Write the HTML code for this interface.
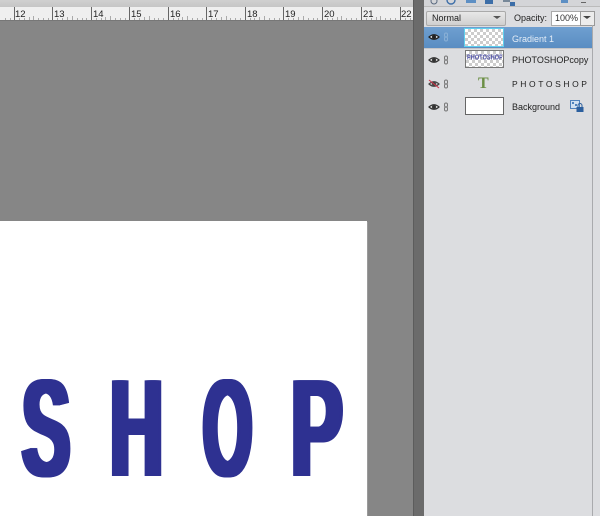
<!DOCTYPE html>
<html><head><meta charset="utf-8"><style>
html,body{margin:0;padding:0;width:600px;height:516px;overflow:hidden}
body{position:relative;background:#868686;font-family:"Liberation Sans",sans-serif}
.a{position:absolute}
.n{font-size:9.5px;color:#222;top:9px;line-height:12px}
.l{font-size:9px;color:#222;line-height:12px;white-space:nowrap}
.ck{background-color:#fff;background-image:linear-gradient(45deg,#ccc 25%,transparent 25%,transparent 75%,#ccc 75%),linear-gradient(45deg,#ccc 25%,transparent 25%,transparent 75%,#ccc 75%);background-size:6px 6px;background-position:0 0,3px 3px}
.b{position:absolute;top:359px;font:700 139px/139px "Liberation Sans",sans-serif;color:#2e3191;transform-origin:0 0;
text-shadow:var(--d) 0 0 #2e3191,calc(var(--d)*-1) 0 0 #2e3191,calc(var(--d)*.66) 0 0 #2e3191,calc(var(--d)*-.66) 0 0 #2e3191,calc(var(--d)*.33) 0 0 #2e3191,calc(var(--d)*-.33) 0 0 #2e3191}
</style></head><body>
<div class="a" style="left:0;top:0;width:414px;height:8px;background:linear-gradient(#d0d0d0,#c4c4c4)"></div>
<div class="a" style="left:0;top:7px;width:414px;height:13px;background:#efefef"></div>
<div class="a" style="left:0;top:20px;width:414px;height:1px;background:#777"></div>
<svg class="a" style="left:0;top:7px" width="414" height="14">
<g stroke="#666" stroke-width="1" shape-rendering="crispEdges">
<path d="M14.5 0V13M52.5 0V13M91.5 0V13M129.5 0V13M168.5 0V13M206.5 0V13M245.5 0V13M283.5 0V13M322.5 0V13M361.5 0V13M400.5 0V13"/>
<path stroke="#aaa" d="M5.5 11V13M10.5 11V13M19.5 11V13M24.5 11V13M29.5 10V13M33.5 9V13M38.5 11V13M43.5 11V13M48.5 11V13M57.5 11V13M62.5 11V13M67.5 10V13M72.5 9V13M77.5 11V13M82.5 11V13M86.5 11V13M96.5 11V13M101.5 11V13M105.5 10V13M110.5 9V13M115.5 11V13M120.5 11V13M125.5 11V13M134.5 11V13M139.5 11V13M144.5 10V13M149.5 9V13M154.5 11V13M158.5 11V13M163.5 11V13M173.5 11V13M178.5 11V13M182.5 10V13M187.5 9V13M192.5 11V13M197.5 11V13M202.5 11V13M211.5 11V13M216.5 11V13M221.5 10V13M226.5 9V13M230.5 11V13M235.5 11V13M240.5 11V13M250.5 11V13M254.5 11V13M259.5 10V13M264.5 9V13M269.5 11V13M274.5 11V13M279.5 11V13M288.5 11V13M293.5 11V13M298.5 10V13M303.5 9V13M308.5 11V13M313.5 11V13M317.5 11V13M327.5 11V13M332.5 11V13M337.5 10V13M341.5 9V13M346.5 11V13M351.5 11V13M356.5 11V13M366.5 11V13M371.5 11V13M376.5 10V13M380.5 9V13M385.5 11V13M390.5 11V13M395.5 11V13M405.5 11V13M410.5 11V13"/>
</g></svg>
<div class="a n" style="left:15px">12</div><div class="a n" style="left:54px">13</div><div class="a n" style="left:93px">14</div><div class="a n" style="left:131px">15</div><div class="a n" style="left:170px">16</div><div class="a n" style="left:208px">17</div><div class="a n" style="left:247px">18</div><div class="a n" style="left:285px">19</div><div class="a n" style="left:324px">20</div><div class="a n" style="left:363px">21</div><div class="a n" style="left:401px">22</div>

<div class="a" style="left:0;top:221px;width:367px;height:295px;background:#fff"></div>
<div class="a" style="left:367px;top:222px;width:1px;height:294px;background:#9a9a9a"></div>

<div class="b" style="left:22px;--d:5.8px;transform:scaleX(.52)">S</div>
<div class="b" style="left:110px;--d:5.66px;transform:scaleX(.53)">H</div>
<div class="b" style="left:202.500px;--d:6.6px;transform:scaleX(.454)">O</div>
<div class="b" style="left:290.600px;--d:5.4px;transform:scaleX(.557)">P</div>

<div class="a" style="left:413px;top:0;width:11px;height:516px;background:#6b6b6b;border-left:1px solid #5c5c5c;box-sizing:border-box"></div>
<div class="a" style="left:424px;top:0;width:176px;height:516px;background:#dcdde0"></div>
<div class="a" style="left:424px;top:0;width:176px;height:7px;background:#d4d5d8;border-bottom:1px solid #bbb;box-sizing:border-box"></div>
<svg class="a" style="left:430px;top:0" width="170" height="7">
<circle cx="4" cy="1" r="3" fill="none" stroke="#5a6a80"/><circle cx="21" cy="0" r="4" fill="none" stroke="#3c6ea8" stroke-width="1.4"/>
<rect x="36" y="0" width="10" height="3" fill="#5d8fc4"/><rect x="55" y="0" width="8" height="4" fill="#3c6ea8"/><rect x="73" y="0" width="7" height="2" fill="#789"/><rect x="80" y="2" width="5" height="4" fill="#3c6ea8"/><rect x="131" y="0" width="7" height="3" fill="#5d8fc4"/><rect x="151" y="2" width="5" height="1" fill="#666"/>
</svg>

<div class="a" style="left:426px;top:11px;width:78px;height:13px;background:linear-gradient(#e8e8e8,#cfcfcf);border:1px solid #aaa;border-radius:2px"></div>
<div class="a l" style="left:432px;top:12px;color:#222">Normal</div>
<div class="a" style="left:493px;top:16px;width:0;height:0;border-left:4px solid transparent;border-right:4px solid transparent;border-top:3px solid #555"></div>
<div class="a l" style="left:514px;top:12px">Opacity:</div>
<div class="a" style="left:551px;top:11px;width:28px;height:13px;background:#fff;border:1px solid #aaa"></div>
<div class="a l" style="left:555px;top:12px;color:#333">100%</div>
<div class="a" style="left:580px;top:11px;width:13px;height:13px;background:#ececec;border:1px solid #999"></div>
<div class="a" style="left:583px;top:16px;width:0;height:0;border-left:4px solid transparent;border-right:4px solid transparent;border-top:3px solid #444"></div>

<div class="a" style="left:424px;top:27px;width:168px;height:21px;background:linear-gradient(#6f9fd0,#5a8dc2)"></div>
<div class="a" style="left:424px;top:48px;width:168px;height:1px;background:#c4c5c8"></div>
<div class="a" style="left:592px;top:25px;width:1px;height:491px;background:#a9aaad"></div>

<div class="a ck" style="left:464px;top:28px;width:38px;height:17px;border:1px solid #5fd0ee"></div>
<div class="a l" style="left:512px;top:33px;color:#e4edf7">Gradient 1</div>

<div class="a ck" style="left:465px;top:50px;width:37px;height:16px;border:1px solid #777;overflow:hidden"></div>
<div class="a" style="left:467px;top:54px;width:35px;font:700 5.5px/8px 'Liberation Sans',sans-serif;letter-spacing:.1px;color:#4a4ca5;white-space:nowrap;overflow:hidden;transform:scaleY(1.3)">PHOTOSHOP</div>
<div class="a l" style="left:512px;top:54px">PHOTOSHOPcopy</div>

<div class="a" style="left:478px;top:75px;font:700 16px/18px 'Liberation Serif',serif;color:#6b8f45">T</div>
<div class="a l" style="left:512px;top:78px;letter-spacing:2.6px;font-size:8.5px">PHOTOSHOP</div>

<div class="a" style="left:465px;top:97px;width:37px;height:16px;background:#fff;border:1px solid #666"></div>
<div class="a l" style="left:512px;top:101px">Background</div>

<svg class="a" style="left:423px;top:27px" width="177" height="95">
<g fill="none">
<g transform="translate(11 10)"><path d="M-5 0Q0-4.500 5 0Q0 4.500-5 0Z" fill="#d6dde6" stroke="#222" stroke-width="1.2"/><circle r="2" fill="#222"/></g>
<g transform="translate(11 33)"><path d="M-5 0Q0-4.500 5 0Q0 4.500-5 0Z" fill="#ddd" stroke="#333" stroke-width="1.2"/><circle r="2" fill="#333"/></g>
<g transform="translate(11 57)"><path d="M-5 0Q0-4.500 5 0Q0 4.500-5 0Z" fill="#bbb" stroke="#444" stroke-width="1.2"/><circle r="2" fill="#444"/><path d="M-5-4L5 4" stroke="#d0344a" stroke-width="1.1"/></g>
<g transform="translate(11 80)"><path d="M-5 0Q0-4.500 5 0Q0 4.500-5 0Z" fill="#ddd" stroke="#333" stroke-width="1.2"/><circle r="2" fill="#333"/></g>
<g stroke="#8ab0d6" stroke-width="1"><rect x="21.500" y="6" width="3" height="4" rx="1.500"/><rect x="21.500" y="10" width="3" height="4" rx="1.500"/></g>
<g stroke="#777" stroke-width="1"><rect x="21.500" y="29" width="3" height="4" rx="1.500"/><rect x="21.500" y="33" width="3" height="4" rx="1.500"/>
<rect x="21.500" y="53" width="3" height="4" rx="1.500"/><rect x="21.500" y="57" width="3" height="4" rx="1.500"/>
<rect x="21.500" y="76" width="3" height="4" rx="1.500"/><rect x="21.500" y="80" width="3" height="4" rx="1.500"/></g>
</g>
<rect x="147.500" y="73.500" width="9" height="8" fill="#cfe0f2" stroke="#4f82bd"/>
<rect x="149" y="75" width="2" height="2" fill="#4f82bd"/><rect x="152" y="77" width="2" height="2" fill="#4f82bd"/>
<path d="M155 80v-1.500a2 2 0 0 1 4 0V80" fill="none" stroke="#2c5f9e"/>
<rect x="153.500" y="80" width="7" height="5" fill="#2c5f9e"/>
</svg>
</body></html>
